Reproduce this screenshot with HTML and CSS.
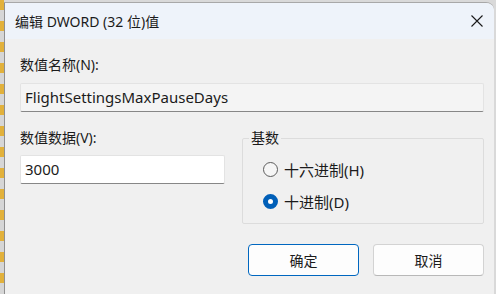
FILE: index.html
```html
<!DOCTYPE html>
<html lang="zh-CN">

<head>
  <meta charset="UTF-8">
  <title>编辑 DWORD (32 位)值</title>
  <link rel="stylesheet" href="styles.css">
</head>

<body>
  <div class="desktop">
    <div class="behind"></div>
    <div class="dialog">
      <div class="titlebar">
        <span class="title">编辑 DWORD (32 位)值</span>
        <button class="close" aria-label="关闭">
          <svg width="12" height="12" viewBox="0 0 12 12">
            <path d="M0.5 0.5 L11.5 11.5 M11.5 0.5 L0.5 11.5" stroke="#1a1a1a" stroke-width="1.1" fill="none" />
          </svg>
        </button>
      </div>

      <div class="content">
        <label class="label">数值名称(N):</label>
        <div class="field readonly">FlightSettingsMaxPauseDays</div>

        <div class="row">
          <div class="data-col">
            <label class="label">数值数据(V):</label>
            <div class="field value">3000</div>
          </div>
          <fieldset class="base">
            <legend>基数</legend>
            <div class="radio"><span class="dot"></span>十六进制(H)</div>
            <div class="radio"><span class="dot checked"></span>十进制(D)</div>
          </fieldset>
        </div>

        <div class="buttons">
          <button class="btn primary">确定</button>
          <button class="btn">取消</button>
        </div>
      </div>
    </div>
  </div>
</body>

</html>
```

FILE: styles.css
```css
body {
  margin: 0;
  background-color: #d9d9d9;
  font-family: "Noto Sans", "Noto Sans CJK SC", sans-serif;
  font-size: 14px;
  color: #1b1b1b;
}

.desktop {
  display: flex;
  height: 294px;
  overflow: hidden;
}

/* 后面窗口露出的一条 */
.behind {
  width: 4px;
  flex: none;
  background: repeating-linear-gradient(to bottom, #e2b13b 0 10px, #d6d6d6 10px 21px);
}

.dialog {
  width: 489px;
  margin-top: 2px;
  border-left: 1px solid #8f8f8f;
  border-top: 1px solid #a8a8a8;
  border-top-right-radius: 8px;
  background-color: #f0f0f0;
  overflow: hidden;
}

.titlebar {
  height: 36px;
  background-color: #eef3fa;
  display: flex;
  align-items: center;
  justify-content: space-between;
  padding: 0 11px 0 10px;
}

.title {
  font-size: 14px;
}

.close {
  border: none;
  background: none;
  padding: 0;
  width: 12px;
  height: 12px;
  display: flex;
}

.content {
  padding: 16px 10px 0 15px;
}

.label {
  display: block;
  line-height: 20px;
}

.field {
  box-sizing: border-box;
  height: 29px;
  line-height: 27px;
  padding: 0 4px;
  border: 1px solid #e3e3e3;
  border-bottom-color: #878787;
  border-radius: 2px;
  font-size: 15px;
}

.readonly {
  margin-top: 8px;
  background-color: #f4f4f4;
}

.row {
  display: flex;
  gap: 17px;
  margin-top: 16px;
}

.data-col {
  width: 205px;
}

.value {
  margin-top: 7px;
  background-color: #ffffff;
}

.base {
  flex: 1;
  margin: 0;
  padding: 0 0 6px 20px;
  border: 1px solid #dcdcdc;
  border-radius: 2px;
  height: 96px;
  box-sizing: border-box;
}

.base legend {
  padding: 0 2px;
  margin-left: -14px;
  line-height: 20px;
}

.radio {
  display: flex;
  align-items: center;
  gap: 6px;
  height: 32px;
  font-size: 15px;
}

.radio:first-of-type {
  margin-top: 5px;
}

.dot {
  box-sizing: border-box;
  width: 15px;
  height: 15px;
  border-radius: 50%;
  border: 1px solid #5d5d5d;
  background-color: #f6f6f6;
}

.dot.checked {
  border: 5px solid #005fb8;
  background-color: #ffffff;
}

.buttons {
  display: flex;
  justify-content: flex-end;
  gap: 14px;
  margin-top: 20px;
}

.btn {
  width: 111px;
  height: 32px;
  font-family: inherit;
  font-size: 14px;
  color: #1b1b1b;
  background-color: #fdfdfd;
  border: 1px solid #d3d3d3;
  border-bottom-color: #b8b8b8;
  border-radius: 4px;
}

.btn.primary {
  border: 1px solid #0067c0;
}
```
